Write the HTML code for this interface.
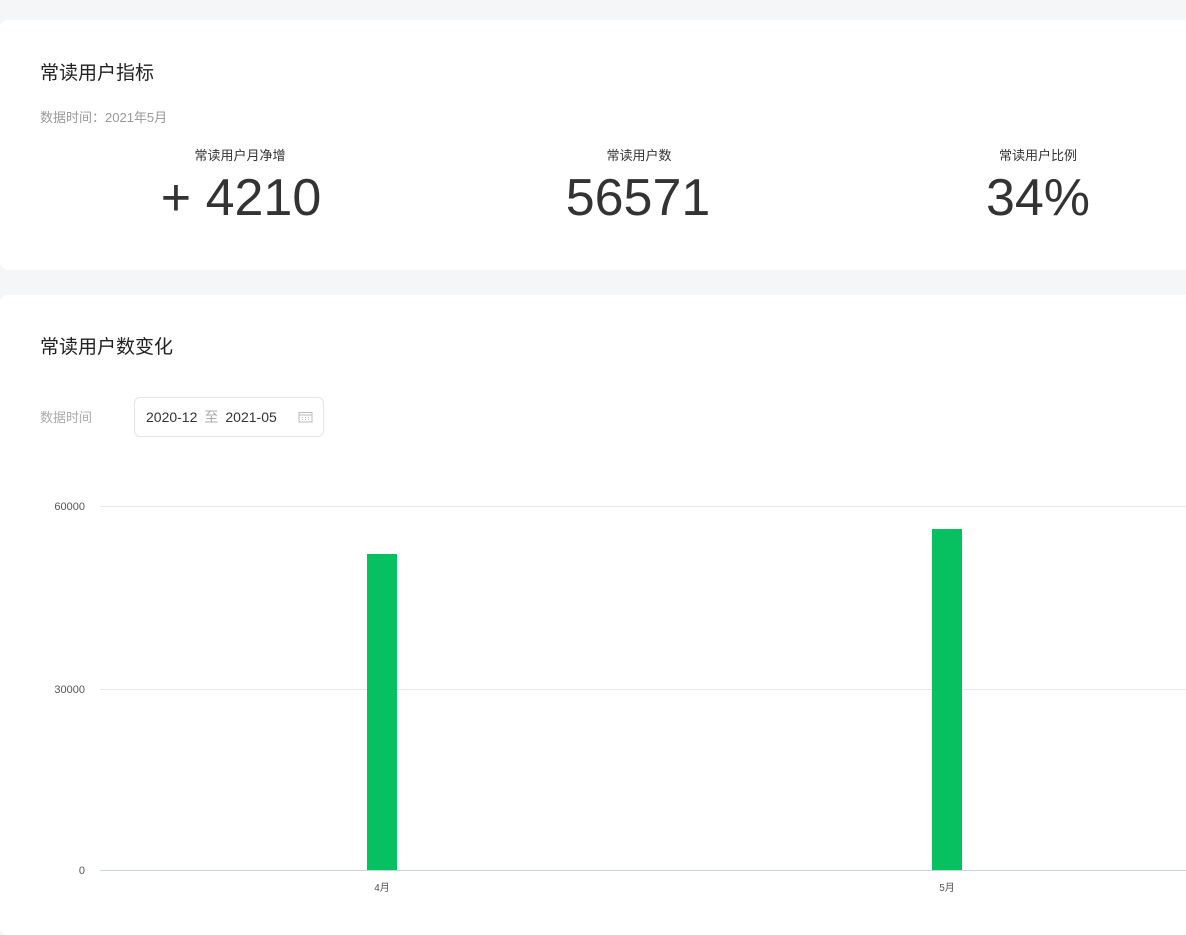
<!DOCTYPE html>
<html><head><meta charset="utf-8"><style>
body{margin:0;width:1186px;height:906px;background:#f5f6f8;overflow:hidden;font-family:"Liberation Sans","Noto Sans CJK SC",sans-serif;color:#333;position:relative}
.card{position:absolute;left:0;width:1200px;background:#fff;border-radius:8px}
.a{position:absolute;white-space:nowrap}
.c{text-align:center;transform:translateX(-50%)}
.g{position:absolute;left:100px;right:0;height:1px;background:#e6e8eb}
.yl{position:absolute;font-size:11px;color:#555;right:1101px}
.bar{position:absolute;width:30px;background:#07c160}
</style></head><body>
<div class="card" style="top:20px;height:250px"></div>
<div class="card" style="top:295px;height:640px"></div>
<div class="a" style="left:40px;top:58px;font-size:19px;color:#222">常读用户指标</div>
<div class="a" style="left:40px;top:107px;font-size:13px;color:#999">数据时间：2021年5月</div>
<div class="a c" style="left:240px;top:145px;font-size:13px">常读用户月净增</div>
<div class="a c" style="left:639px;top:145px;font-size:13px">常读用户数</div>
<div class="a c" style="left:1038px;top:145px;font-size:13px">常读用户比例</div>
<div class="a c" style="left:241px;top:168px;font-size:52px;color:#333">+ 4210</div>
<div class="a c" style="left:638px;top:168px;font-size:52px;color:#333">56571</div>
<div class="a c" style="left:1038px;top:168px;font-size:52px;color:#333">34%</div>
<div class="a" style="left:40px;top:332px;font-size:19px;color:#222">常读用户数变化</div>
<div class="a" style="left:40px;top:407px;font-size:13px;color:#aaa">数据时间</div>
<div class="a" style="left:134px;top:397px;width:188px;height:38px;border:1px solid #e3e5e8;border-radius:6px;font-size:14px;line-height:38px">
<span style="margin-left:11px">2020-12</span><span style="color:#aaa;margin:0 7px">至</span><span>2021-05</span>
<svg width="15" height="12" viewBox="0 0 15 12" style="position:absolute;left:163px;top:13px"><rect x="1" y="1.5" width="13" height="9.5" fill="none" stroke="#bbb"/><line x1="1" y1="4" x2="14" y2="4" stroke="#bbb"/><g fill="#bbb"><rect x="4" y="6" width="1" height="1"/><rect x="7" y="6" width="1" height="1"/><rect x="10" y="6" width="1" height="1"/><rect x="4" y="8" width="1" height="1"/><rect x="7" y="8" width="1" height="1"/><rect x="10" y="8" width="1" height="1"/></g></svg></div>
<div class="g" style="top:506px"></div>
<div class="g" style="top:689px"></div>
<div class="g" style="top:870px;background:#c9d3de"></div>
<div class="yl" style="top:501px">60000</div>
<div class="yl" style="top:684px">30000</div>
<div class="yl" style="top:865px">0</div>
<div class="bar" style="left:367px;top:554px;height:316px"></div>
<div class="bar" style="left:932px;top:529px;height:341px"></div>
<div class="a c" style="left:382px;top:879px;font-size:10px;color:#555">4月</div>
<div class="a c" style="left:947px;top:879px;font-size:10px;color:#555">5月</div>
</body></html>
